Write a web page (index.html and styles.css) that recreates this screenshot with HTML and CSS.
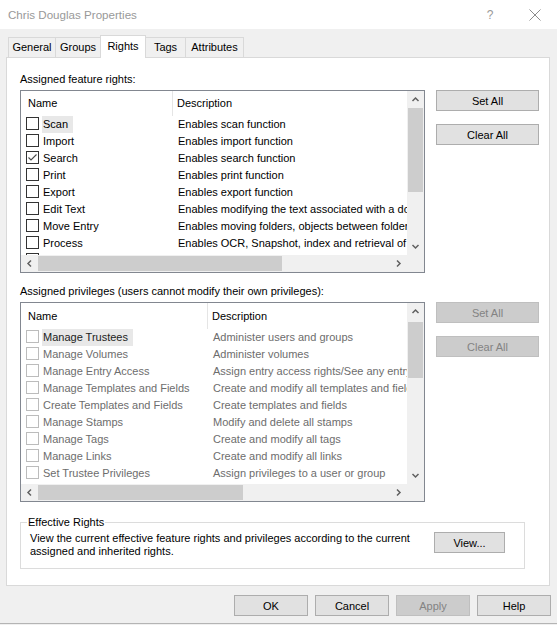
FILE: index.html
```html
<!DOCTYPE html>
<html>
<head>
<meta charset="utf-8">
<title>Chris Douglas Properties</title>
<link rel="stylesheet" href="styles.css">
</head>
<body>
<div class="window">
  <div class="titlebar">
    <span class="title">Chris Douglas Properties</span>
    <span class="tb-help">?</span>
    <span class="tb-close"><svg width="12" height="12" viewBox="0 0 12 12"><path d="M0.5 0.5L11.5 11.5M11.5 0.5L0.5 11.5" stroke="#8c8c8c" stroke-width="1" fill="none"/></svg></span>
  </div>
  <div class="dialog">
    <div class="tabs">
      <div class="tab tab-general">General</div>
      <div class="tab tab-groups">Groups</div>
      <div class="tab tab-rights selected">Rights</div>
      <div class="tab tab-tags">Tags</div>
      <div class="tab tab-attrs">Attributes</div>
    </div>
    <div class="panel">
      <div class="label">Assigned feature rights:</div>
      <div class="section section-first">
        <div class="listview lv-features">
          <div class="lv-main">
            <div class="lv-header">
              <div class="hcell hname">Name</div>
              <div class="hcell hdesc">Description</div>
            </div>
            <div class="lv-row"><div class="cname"><span class="cb"></span><span class="item focus">Scan</span></div><div class="cdesc">Enables scan function</div></div>
            <div class="lv-row"><div class="cname"><span class="cb"></span><span class="item">Import</span></div><div class="cdesc">Enables import function</div></div>
            <div class="lv-row"><div class="cname"><span class="cb checked"><svg width="11" height="11" viewBox="0 0 11 11"><path d="M1.5 5.5L4 8L9.5 2.5" stroke="#4a4a4a" stroke-width="1.1" fill="none"/></svg></span><span class="item">Search</span></div><div class="cdesc">Enables search function</div></div>
            <div class="lv-row"><div class="cname"><span class="cb"></span><span class="item">Print</span></div><div class="cdesc">Enables print function</div></div>
            <div class="lv-row"><div class="cname"><span class="cb"></span><span class="item">Export</span></div><div class="cdesc">Enables export function</div></div>
            <div class="lv-row"><div class="cname"><span class="cb"></span><span class="item">Edit Text</span></div><div class="cdesc">Enables modifying the text associated with a document</div></div>
            <div class="lv-row"><div class="cname"><span class="cb"></span><span class="item">Move Entry</span></div><div class="cdesc">Enables moving folders, objects between folders</div></div>
            <div class="lv-row"><div class="cname"><span class="cb"></span><span class="item">Process</span></div><div class="cdesc">Enables OCR, Snapshot, index and retrieval of text</div></div>
            <div class="lv-row"><div class="cname"><span class="cb"></span></div><div class="cdesc"></div></div>
          </div>
          <div class="vscroll">
            <div class="sb-arrow"><svg width="17" height="17" viewBox="0 0 17 17"><path d="M5.5 10L8.5 7L11.5 10" stroke="#606060" stroke-width="1.5" fill="none"/></svg></div>
            <div class="sb-thumb" style="height:84px"></div>
            <div class="sb-track"></div>
            <div class="sb-arrow"><svg width="17" height="17" viewBox="0 0 17 17"><path d="M5.5 7L8.5 10L11.5 7" stroke="#606060" stroke-width="1.5" fill="none"/></svg></div>
          </div>
          <div class="hscroll">
            <div class="sb-arrow"><svg width="17" height="17" viewBox="0 0 17 17"><path d="M10 5.5L7 8.5L10 11.5" stroke="#606060" stroke-width="1.5" fill="none"/></svg></div>
            <div class="sb-thumb" style="width:244px"></div>
            <div class="sb-track"></div>
            <div class="sb-arrow"><svg width="17" height="17" viewBox="0 0 17 17"><path d="M7 5.5L10 8.5L7 11.5" stroke="#606060" stroke-width="1.5" fill="none"/></svg></div>
          </div>
          <div class="corner"></div>
        </div>
        <div class="side-buttons">
          <button class="btn side-btn">Set All</button>
          <button class="btn side-btn">Clear All</button>
        </div>
      </div>

      <div class="label label-second">Assigned privileges (users cannot modify their own privileges):</div>
      <div class="section section-second">
        <div class="listview lv-privs disabled">
          <div class="lv-main">
            <div class="lv-header">
              <div class="hcell hname">Name</div>
              <div class="hcell hdesc">Description</div>
            </div>
            <div class="lv-row"><div class="cname"><span class="cb"></span><span class="item focus">Manage Trustees</span></div><div class="cdesc">Administer users and groups</div></div>
            <div class="lv-row"><div class="cname"><span class="cb"></span><span class="item">Manage Volumes</span></div><div class="cdesc">Administer volumes</div></div>
            <div class="lv-row"><div class="cname"><span class="cb"></span><span class="item">Manage Entry Access</span></div><div class="cdesc">Assign entry access rights/See any entry</div></div>
            <div class="lv-row"><div class="cname"><span class="cb"></span><span class="item">Manage Templates and Fields</span></div><div class="cdesc">Create and modify all templates and fields</div></div>
            <div class="lv-row"><div class="cname"><span class="cb"></span><span class="item">Create Templates and Fields</span></div><div class="cdesc">Create templates and fields</div></div>
            <div class="lv-row"><div class="cname"><span class="cb"></span><span class="item">Manage Stamps</span></div><div class="cdesc">Modify and delete all stamps</div></div>
            <div class="lv-row"><div class="cname"><span class="cb"></span><span class="item">Manage Tags</span></div><div class="cdesc">Create and modify all tags</div></div>
            <div class="lv-row"><div class="cname"><span class="cb"></span><span class="item">Manage Links</span></div><div class="cdesc">Create and modify all links</div></div>
            <div class="lv-row"><div class="cname"><span class="cb"></span><span class="item">Set Trustee Privileges</span></div><div class="cdesc">Assign privileges to a user or group</div></div>
          </div>
          <div class="vscroll">
            <div class="sb-arrow"><svg width="17" height="17" viewBox="0 0 17 17"><path d="M5.5 10L8.5 7L11.5 10" stroke="#606060" stroke-width="1.5" fill="none"/></svg></div>
            <div class="sb-thumb" style="height:56px;margin-top:2px"></div>
            <div class="sb-track"></div>
            <div class="sb-arrow"><svg width="17" height="17" viewBox="0 0 17 17"><path d="M5.5 7L8.5 10L11.5 7" stroke="#606060" stroke-width="1.5" fill="none"/></svg></div>
          </div>
          <div class="hscroll">
            <div class="sb-arrow"><svg width="17" height="17" viewBox="0 0 17 17"><path d="M10 5.5L7 8.5L10 11.5" stroke="#606060" stroke-width="1.5" fill="none"/></svg></div>
            <div class="sb-thumb" style="width:205px"></div>
            <div class="sb-track"></div>
            <div class="sb-arrow"><svg width="17" height="17" viewBox="0 0 17 17"><path d="M7 5.5L10 8.5L7 11.5" stroke="#606060" stroke-width="1.5" fill="none"/></svg></div>
          </div>
          <div class="corner"></div>
        </div>
        <div class="side-buttons">
          <button class="btn side-btn disabled">Set All</button>
          <button class="btn side-btn disabled">Clear All</button>
        </div>
      </div>

      <fieldset class="groupbox">
        <legend>Effective Rights</legend>
        <div class="gb-body">
          <div class="gb-text">View the current effective feature rights and privileges according to the current<br>assigned and inherited rights.</div>
          <button class="btn view-btn">View...</button>
        </div>
      </fieldset>
    </div>
    <div class="footer">
      <button class="btn foot-btn">OK</button>
      <button class="btn foot-btn">Cancel</button>
      <button class="btn foot-btn disabled">Apply</button>
      <button class="btn foot-btn">Help</button>
    </div>
  </div>
</div>
</body>
</html>
```

FILE: styles.css
```css
* {
  box-sizing: border-box;
}

html, body {
  margin: 0;
  padding: 0;
}

body {
  width: 557px;
  height: 625px;
  overflow: hidden;
  font-family: "Liberation Sans", Arial, sans-serif;
  font-size: 11px;
  color: #000;
  background: #f0f0f0;
}

.window {
  width: 557px;
  height: 624px;
  display: flex;
  flex-direction: column;
  background: #f0f0f0;
}

/* Title bar */
.titlebar {
  height: 29px;
  flex: none;
  background: #fff;
  display: flex;
  align-items: center;
  padding-left: 8px;
  color: #999;
}

.title {
  flex: 1;
  font-size: 11.6px;
}

.tb-help {
  width: 12px;
  text-align: center;
  font-size: 12px;
  margin-right: 33px;
}

.tb-close {
  width: 12px;
  height: 12px;
  margin-right: 16px;
  display: flex;
}

/* Dialog body */
.dialog {
  flex: 1;
  display: flex;
  flex-direction: column;
  padding-left: 6px;
  border-bottom: 1px solid #b4b4b4;
}

.tabs {
  height: 28px;
  flex: none;
  display: flex;
  align-items: flex-end;
  padding-left: 2px;
}

.tab {
  height: 20px;
  border: 1px solid #d9d9d9;
  border-bottom: none;
  background: #f0f0f0;
  margin-left: -1px;
  text-align: center;
  line-height: 19px;
}

.tab:first-child {
  margin-left: 0;
}

.tab-general { width: 48px; }
.tab-groups { width: 46px; }
.tab-rights { width: 46px; }
.tab-tags { width: 41px; }
.tab-attrs { width: 59px; }

.tab.selected {
  height: 23px;
  margin-bottom: -1px;
  background: #fff;
  position: relative;
  z-index: 1;
  line-height: 21px;
}

.panel {
  width: 544px;
  height: 529px;
  flex: none;
  border: 1px solid #d9d9d9;
  background: #fff;
  padding: 13px 0 0 13px;
}

.label {
  line-height: 16px;
  height: 16px;
}

.label-second {
  margin-top: 10px;
}

.section {
  display: flex;
  gap: 11px;
  margin-top: 3px;
}

.side-buttons {
  width: 103px;
  display: flex;
  flex-direction: column;
  gap: 13px;
}

/* Buttons */
.btn {
  font: inherit;
  height: 21px;
  padding: 0;
  border: 1px solid #adadad;
  background: #e1e1e1;
  color: #000;
}

.btn.disabled {
  background: #cccccc;
  border-color: #bfbfbf;
  color: #838383;
}

.side-btn {
  width: 103px;
}

/* List views */
.listview {
  width: 405px;
  border: 1px solid #828790;
  background: #fff;
  display: grid;
  grid-template-columns: 386px 17px;
}

.lv-features {
  height: 183px;
  grid-template-rows: 164px 17px;
}

.lv-privs {
  height: 200px;
  grid-template-rows: 181px 17px;
}

.lv-main {
  overflow: hidden;
  white-space: nowrap;
}

.lv-header {
  height: 25px;
  display: grid;
  grid-template-columns: 152px 1fr;
}

.lv-privs .lv-header {
  height: 26px;
  grid-template-columns: 187px 1fr;
}

.hcell {
  display: flex;
  align-items: center;
  padding-bottom: 1px;
}

.hname {
  padding-left: 7px;
  border-right: 1px solid #e5e5e5;
}

.hdesc {
  padding-left: 4px;
}

.lv-row {
  height: 17px;
  display: grid;
  grid-template-columns: 152px 1fr;
}

.lv-privs .lv-row {
  grid-template-columns: 187px 1fr;
}

.cname {
  display: flex;
  align-items: flex-start;
  padding-left: 5px;
  overflow: hidden;
}

.cdesc {
  padding-left: 5px;
  line-height: 17px;
  overflow: hidden;
}

.cb {
  width: 13px;
  height: 13px;
  flex: none;
  margin-top: 1px;
  border: 1px solid #333;
  background: #fff;
  display: flex;
  align-items: center;
  justify-content: center;
}

.item {
  margin-left: 3px;
  padding: 0 5px 0 1px;
  line-height: 17px;
}

.item.focus {
  background: #e8e8e8;
}

.disabled .cb {
  border-color: #bcbcbc;
}

.disabled .cdesc,
.disabled .item {
  color: #6d6d6d;
}

.disabled .item.focus {
  color: #222;
}

/* Scrollbars */
.vscroll {
  grid-column: 2;
  grid-row: 1;
  background: #f0f0f0;
  display: flex;
  flex-direction: column;
}

.hscroll {
  grid-column: 1;
  grid-row: 2;
  background: #f0f0f0;
  display: flex;
}

.corner {
  grid-column: 2;
  grid-row: 2;
  background: #f0f0f0;
}

.sb-arrow {
  width: 17px;
  height: 17px;
  flex: none;
  display: flex;
}

.sb-thumb {
  flex: none;
  background: #cdcdcd;
}

.vscroll .sb-thumb {
  margin-left: 1px;
  margin-right: 1px;
}

.hscroll .sb-thumb {
  margin-top: 1px;
  margin-bottom: 1px;
}

.sb-track {
  flex: 1;
}

/* Group box */
.groupbox {
  margin: 13px 0 0 0;
  width: 505px;
  min-width: 0;
  border: 1px solid #dcdcdc;
  padding: 3px 19px 10px 9px;
}

.groupbox legend {
  margin-left: -3px;
  padding: 0 1px;
  line-height: 14px;
}

.gb-body {
  display: flex;
  align-items: flex-start;
}

.gb-text {
  flex: 1;
  line-height: 13px;
  white-space: nowrap;
}

.view-btn {
  width: 71px;
}

/* Footer */
.footer {
  display: flex;
  justify-content: flex-end;
  gap: 7px;
  padding-right: 6px;
  margin-top: 9px;
}

.foot-btn {
  width: 74px;
}
```
